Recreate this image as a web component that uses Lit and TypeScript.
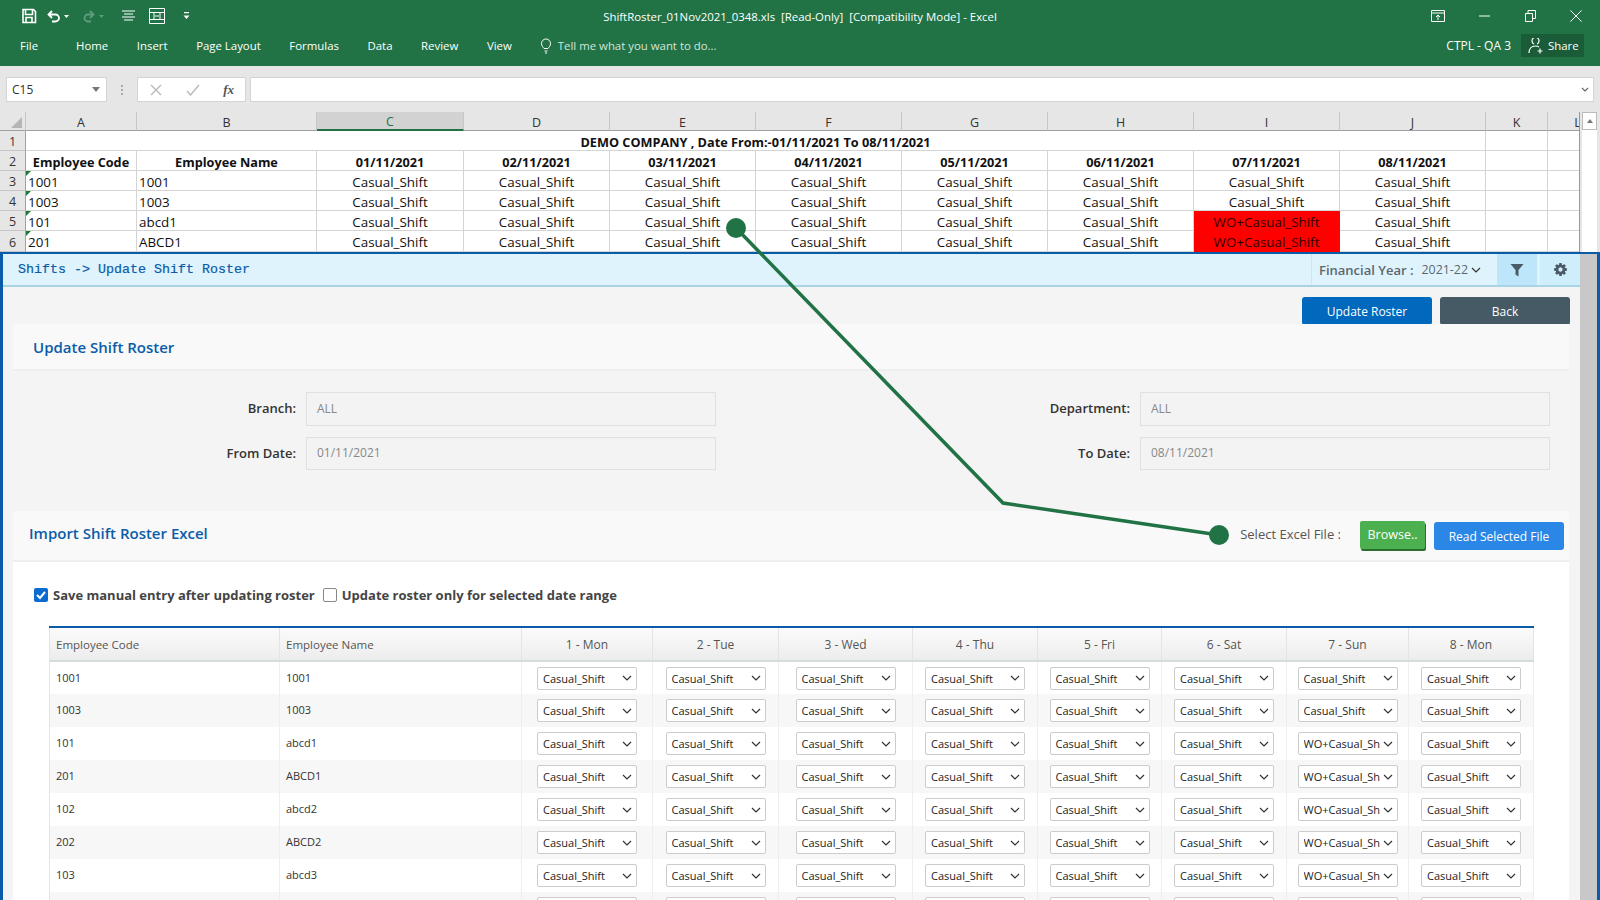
import { LitElement, html, css, svg } from 'lit';
import { customElement } from 'lit/decorators.js';

const sheetCols = ['A', 'B', 'C', 'D', 'E', 'F', 'G', 'H', 'I', 'J', 'K', 'L'];
const sheetDates = ['01/11/2021', '02/11/2021', '03/11/2021', '04/11/2021', '05/11/2021', '06/11/2021', '07/11/2021', '08/11/2021'];
const employees = [
  ['1001', '1001', false],
  ['1003', '1003', false],
  ['101', 'abcd1', true],
  ['201', 'ABCD1', true],
  ['102', 'abcd2', true],
  ['202', 'ABCD2', true],
  ['103', 'abcd3', true],
  ['203', 'ABCD3', true],
] as const;
const days = ['1 - Mon', '2 - Tue', '3 - Wed', '4 - Thu', '5 - Fri', '6 - Sat', '7 - Sun', '8 - Mon'];
const cogPath = 'M1152 896q0-106-75-181t-181-75-181 75-75 181 75 181 181 75 181-75 75-181zm512-109v222q0 12-8 23t-20 13l-185 28q-19 54-39 91 35 50 107 138 10 12 10 25t-9 23q-27 37-99 108t-94 71q-12 0-26-9l-138-108q-44 23-91 38-16 136-29 186-7 28-36 28h-222q-14 0-24.5-8.5t-11.5-21.5l-28-184q-49-16-90-37l-141 107q-10 9-25 9-14 0-25-11-126-114-165-168-7-10-7-23 0-12 8-23 15-21 51-66.5t54-70.5q-27-50-41-99l-183-27q-13-2-21-12.5t-8-23.5v-222q0-12 8-23t19-13l186-28q14-46 39-92-40-57-107-138-10-12-10-24 0-10 9-23 26-36 98.5-107.5t94.5-71.5q13 0 26 10l138 107q44-23 91-38 16-136 29-186 7-28 36-28h222q14 0 24.5 8.5t11.5 21.5l28 184q49 16 90 37l142-107q9-9 24-9 13 0 25 10 129 119 165 170 7 8 7 22 0 12-8 23-15 21-51 66.5t-54 70.5q26 50 41 98l183 28q13 2 21 12.5t8 23.5z';

const chevron = svg`<svg class="chev" width="10" height="6" viewBox="0 0 10 6"><path d="M1 1l4 4 4-4" fill="none" stroke="#333" stroke-width="1.2"/></svg>`;

@customElement('app-root')
export class AppRoot extends LitElement {
  static styles = css`
    :host {
      display: block;
      position: relative;
      width: 1600px;
      height: 900px;
      overflow: hidden;
      background: #e6e6e6;
      font-family: 'Open Sans', 'Noto Sans', sans-serif;
      color: #333;
    }
    svg { display: block; }

    /* excel chrome */
    .ribbon { height: 66px; background: #217346; color: #fff; font-size: 11.4px; display: flex; flex-direction: column; }
    .title-row { height: 32px; display: flex; align-items: center; position: relative; }
    .qat { display: flex; align-items: center; padding-left: 20px; gap: 0; }
    .qat span { display: flex; justify-content: center; }
    .doc-title { position: absolute; left: 0; right: 0; text-align: center; font-size: 11.4px; top: 9px; white-space: pre; }
    .win { margin-left: auto; display: flex; position: relative; padding-right: 1px; }
    .win span { width: 46px; display: flex; justify-content: center; align-items: center; }
    .tab-row { height: 34px; display: flex; align-items: center; padding-left: 20px; padding-bottom: 7px; box-sizing: border-box; position: relative; }
    .tab-row .file { margin-right: 38px; }
    .tabs { display: flex; gap: 28.6px; }
    .tell { display: flex; align-items: center; gap: 6px; margin-left: 28px; color: #d5e4dc; }
    .acct { margin-left: auto; display: flex; align-items: center; gap: 10px; padding-right: 16px; }
    .acct > span { font-size: 12px; }
    .share { display: flex; align-items: center; gap: 4px; width: 63px; height: 23px; padding-left: 7px; box-sizing: border-box; background: #1a5c38; }

    .formula { height: 46px; box-sizing: border-box; padding: 11px 6px 10px; display: flex; align-items: stretch; font-size: 12px; }
    .box { background: #fff; border: 1px solid #d4d4d4; box-sizing: border-box; display: flex; align-items: center; }
    .name-box { width: 101px; padding: 0 6px 0 5px; justify-content: space-between; }
    .caret { width: 0; height: 0; border: 4px solid transparent; border-top: 5px solid #777; border-bottom: 0; }
    .dots { width: 30px; display: flex; flex-direction: column; gap: 2px; align-items: center; justify-content: center; }
    .dots i { width: 2px; height: 2px; background: #aaa; }
    .fx-box { width: 109px; justify-content: space-between; padding: 0 11px 0 12px; color: #777; }
    .fx { font: italic bold 13px 'Liberation Serif', serif; color: #555; }
    .input-box { width: 1344px; margin-left: 4px; justify-content: flex-end; padding-right: 4px; }

    /* sheet */
    .sheet-wrap { height: 140px; display: flex; background: #e6e6e6; }
    .sheet { width: 1579px; flex-shrink: 0; display: grid; grid-template-columns: 26px 111px 180px 147px 146px 146px 146px 146px 146px 146px 146px 62px 60px; grid-template-rows: 19px repeat(5, 20px) 21px; font-size: 13.4px; color: #111; overflow: hidden; border-right: 1px solid #999; box-sizing: content-box; }
    .cell { background: #fff; border-right: 1px solid #d4d4d4; border-bottom: 1px solid #d4d4d4; box-sizing: border-box; display: flex; align-items: center; justify-content: center; white-space: nowrap; position: relative; overflow: hidden; padding-top: 2px; }
    .cell.left { justify-content: flex-start; padding-left: 2px; }
    .cell.b { font-weight: 700; font-size: 12.7px; }
    .cell.red { background: #f00; border-color: #f00; color: #300; }
    .cell.flag::before { content: ''; position: absolute; left: 0; top: 0; border-top: 5px solid #1c7a3c; border-right: 5px solid transparent; }
    .cell.merged { grid-column: 2 / span 10; }
    .hd { background: #e6e6e6; border-right: 1px solid #c6c6c6; border-bottom: 1px solid #a0a0a0; box-sizing: border-box; display: flex; align-items: center; justify-content: center; font-size: 12.5px; color: #333; position: relative; overflow: hidden; padding-top: 2px; }
    .hd.sel { background: #d2d2d2; border-bottom: 2px solid #217346; color: #217346; }
    .hd.row { border-bottom: 1px solid #c6c6c6; border-right: 1px solid #a0a0a0; }
    .corner { align-items: flex-end; justify-content: flex-end; padding: 0 3px 2px 0; }
    .corner i { border-bottom: 11px solid #b5b5b5; border-left: 11px solid transparent; }
    .vscroll { width: 15px; margin-left: 2px; background: #fff; box-sizing: border-box; display: flex; flex-direction: column; align-items: center; }
    .vscroll span { width: 15px; height: 18px; background: #fff; border: 1px solid #bbb; box-sizing: border-box; display: flex; align-items: center; justify-content: center; }
    .vscroll span i { border: 3px solid transparent; border-bottom: 4px solid #777; border-top: 0; }

    /* web app panel */
    .panel { height: 648px; display: flex; border-top: 2px solid #0a5ca8; border-left: 3px solid #0a5ca8; border-right: 3px solid #0a5ca8; box-sizing: border-box; background: #f4f4f4; }
    .main { width: 1577px; display: flex; flex-direction: column; }
    .page-scroll { width: 17px; background: #c8c8c8; }
    .crumb { height: 31px; background: #dff3fd; border-bottom: 2px solid #a8d4e4; display: flex; align-items: center; flex-shrink: 0; box-sizing: content-box; }
    .crumb-text { font: 13.33px 'Liberation Mono', monospace; color: #0a5ca8; padding-left: 15px; -webkit-text-stroke: 0.2px #0a5ca8; }
    .fy { margin-left: auto; height: 100%; display: flex; align-items: center; border-left: 1px solid #cbe7f5; padding-left: 7px; width: 186px; box-sizing: border-box; color: #5b6770; }
    .fy b { font-size: 13px; font-weight: 600; margin-right: 8px; }
    .fy span { font-size: 12.4px; margin-right: 3px; }
    .tool { width: 40px; height: 100%; background: #bde6fb; display: flex; align-items: center; justify-content: center; margin-right: 3px; }
    .tool.plain { background: #cfeefc; margin-right: 0; width: 40px; }
    .actions { height: 37px; flex-shrink: 0; display: flex; justify-content: flex-end; align-items: flex-start; gap: 8px; padding: 10px 10px 0 0; box-sizing: border-box; }
    .btn { height: 28px; border-radius: 3px; color: #fff; font-size: 12px; display: flex; align-items: center; justify-content: center; box-sizing: border-box; }
    .btn.primary { width: 130px; background: #0069bd; }
    .btn.dark { width: 130px; background: #455a64; }
    .head { margin: 0 11px 0 10px; background: #f9f9f9; border-bottom: 2px solid #eeeeee; display: flex; align-items: center; box-sizing: border-box; flex-shrink: 0; }
    .head h2 { margin: 0; font-size: 15px; font-weight: 600; color: #0a5ca8; }
    .head.one { height: 47px; padding-left: 20px; }
    .head.two { height: 51px; padding-left: 16px; margin-top: 41px; }
    .head.two h2 { margin-bottom: 5px; }
    .form { margin: 21px 11px 0 10px; display: grid; grid-template-columns: 283px 410px 404px 410px; grid-template-rows: 34px 33px; column-gap: 10px; row-gap: 11px; align-items: center; }
    .form label { text-align: right; font-size: 13px; font-weight: 600; color: #333; padding-bottom: 2px; }
    .ro { height: 100%; box-sizing: border-box; border: 1px solid #e0e0e0; background: #f3f3f3; color: #888; font-size: 12px; display: flex; align-items: center; padding: 0 0 2px 10px; }
    .import-right { margin-left: auto; display: flex; align-items: center; padding-right: 5px; }
    .import-right .lbl { font-size: 13px; color: #555; margin: 0 19px 4px 0; }
    .browse { width: 65px; height: 28px; background: #4caf50; color: #fff; font-size: 12.5px; border-radius: 2px; box-shadow: 1px 2px 0 #2c6e30; display: flex; align-items: center; justify-content: center; margin-right: 9px; margin-top: -2px; }
    .read { width: 130px; background: #2a87e6; padding-top: 1px; }
    .body { margin: 0 11px 0 10px; background: #fff; flex: 1; padding: 26px 0 0 21px; overflow: hidden; }
    .checks { display: flex; align-items: center; height: 14px; font-size: 13px; font-weight: 700; color: #444; white-space: nowrap; }
    .cb { width: 14px; height: 14px; box-sizing: border-box; border-radius: 2px; margin-right: 5px; flex-shrink: 0; }
    .cb.on { background: #0a6cd0; }
    .cb.off { border: 1.5px solid #888; background: #fff; margin-left: 8px; }
    table { border-collapse: collapse; table-layout: fixed; width: 1484px; margin: 24px 0 0 15px; font-size: 11px; color: #333; border-top: 2px solid #0a5ca8; }
    th { height: 34px; font-weight: 400; font-size: 12px; color: #555; background: linear-gradient(#fbfbfb, #ececec); border-right: 1px solid #e4e4e4; border-bottom: 2px solid #d5dcdc; padding: 1px 6px 0; text-align: center; box-sizing: border-box; }
    th.left { text-align: left; font-size: 11.5px; }
    th:first-child, td:first-child { border-left: 1px solid #e4e4e4; }
    td { height: 33px; border-right: 1px solid #eeeeee; padding: 0 6px; box-sizing: border-box; }
    td.txt { padding-bottom: 2px; }
    tbody tr:nth-child(even) td { background: #f7f7f7; }
    .select { width: 100px; height: 23px; margin: 0 auto; box-sizing: border-box; border: 1px solid #ccc; border-radius: 2px; background: #fff; display: flex; align-items: center; gap: 3px; padding: 0 4px 0 5px; font-size: 11px; color: #222; }
    .select span { flex: 1; overflow: hidden; white-space: nowrap; }
    .overlay { position: absolute; left: 0; top: 0; pointer-events: none; }
  `;

  renderSheet() {
    return html`
      <div class="sheet">
        <div class="hd corner"><i></i></div>
        ${sheetCols.map((c) => html`<div class="hd ${c === 'C' ? 'sel' : ''}">${c}</div>`)}

        <div class="hd row">1</div>
        <div class="cell b merged">DEMO COMPANY , Date From:-01/11/2021 To 08/11/2021</div>
        <div class="cell"></div><div class="cell"></div>

        <div class="hd row">2</div>
        <div class="cell b">Employee Code</div>
        <div class="cell b">Employee Name</div>
        ${sheetDates.map((d) => html`<div class="cell b">${d}</div>`)}
        <div class="cell"></div><div class="cell"></div>

        ${employees.slice(0, 4).map((e, i) => html`
          <div class="hd row">${i + 3}</div>
          <div class="cell left flag">${e[0]}</div>
          <div class="cell left">${e[1]}</div>
          ${sheetDates.map((_, d) => d === 6 && e[2]
            ? html`<div class="cell red">WO+Casual_Shift</div>`
            : html`<div class="cell">Casual_Shift</div>`)}
          <div class="cell"></div><div class="cell"></div>
        `)}
      </div>
      <div class="vscroll"><span><i></i></span></div>
    `;
  }

  renderTable() {
    const widths = [230, 242, 131, 126, 134, 125, 124, 125, 122, 125];
    return html`
      <table>
        <colgroup>${widths.map((w) => html`<col style="width:${w}px" />`)}</colgroup>
        <thead>
          <tr>
            <th class="left">Employee Code</th>
            <th class="left">Employee Name</th>
            ${days.map((d) => html`<th>${d}</th>`)}
          </tr>
        </thead>
        <tbody>
          ${employees.map((e) => html`
            <tr>
              <td class="txt">${e[0]}</td>
              <td class="txt">${e[1]}</td>
              ${days.map((_, d) => html`
                <td><div class="select"><span>${d === 6 && e[2] ? 'WO+Casual_Shift' : 'Casual_Shift'}</span>${chevron}</div></td>
              `)}
            </tr>
          `)}
        </tbody>
      </table>
    `;
  }

  render() {
    return html`
      <div class="ribbon">
        <div class="title-row">
          <div class="doc-title">ShiftRoster_01Nov2021_0348.xls  [Read-Only]  [Compatibility Mode] - Excel</div>
          <div class="qat">
            <span style="width:18px"><svg width="16" height="16" viewBox="0 0 16 16"><path d="M2 1.5h10.5L14.5 3.5V14.5H2z M4.5 1.5v5h7v-5 M5 14.5v-5h6v5" fill="none" stroke="#fff" stroke-width="1.6"/></svg></span>
            <span style="width:40px"><svg width="24" height="14" viewBox="0 0 24 14"><path d="M3 5.5h6.5a3.5 3.5 0 0 1 0 7H6 M6 2L2.5 5.5 6 9" fill="none" stroke="#fff" stroke-width="1.8"/><path d="M18 6h5l-2.5 3z" fill="#fff"/></svg></span>
            <span style="width:32px"><svg width="24" height="14" viewBox="0 0 24 14"><path d="M11 5.5H6a3.5 3.5 0 0 0 0 7h3 M8 2l3.5 3.5L8 9" fill="none" stroke="#5d9c7c" stroke-width="1.8"/><path d="M17 6h5l-2.5 3z" fill="#5d9c7c"/></svg></span>
            <span style="width:36px"><svg width="15" height="14" viewBox="0 0 15 14"><path d="M1 2h13M3 5h9M1 8h13M3 11h9" stroke="#fff" stroke-width="1.2"/></svg></span>
            <span style="width:22px"><svg width="16" height="16" viewBox="0 0 16 16"><path d="M.5.5h15v15H.5z M.5 4.5h15M.5 11.5h15M5 4.5v7M11 4.5v7M6 8h4" fill="none" stroke="#fff"/></svg></span>
            <span style="width:36px"><svg width="7" height="8" viewBox="0 0 7 8"><path d="M1 0h5v1.2H1z M.5 3.5h6L3.500 7z" fill="#fff"/></svg></span>
          </div>
          <div class="win">
            <span><svg width="14" height="12" viewBox="0 0 14 12"><path d="M.5.500h13v11H.5z M.5 3h13 M7 10V5 M5 7l2-2 2 2" fill="none" stroke="#fff"/></svg></span>
            <span><svg width="11" height="2" viewBox="0 0 11 2"><path d="M0 1h11" stroke="#fff"/></svg></span>
            <span><svg width="11" height="12" viewBox="0 0 11 12"><path d="M.5 3.500h7v8h-7z M3 3.500V.500h7.500v8H7.500" fill="none" stroke="#fff"/></svg></span>
            <span><svg width="12" height="12" viewBox="0 0 12 12"><path d="M.5.500l11 11M11.500.500l-11 11" stroke="#fff"/></svg></span>
          </div>
        </div>
        <div class="tab-row">
          <span class="file">File</span>
          <div class="tabs">
            <span>Home</span><span>Insert</span><span>Page Layout</span><span>Formulas</span><span>Data</span><span>Review</span><span>View</span>
          </div>
          <div class="tell">
            <svg width="12" height="16" viewBox="0 0 12 16"><path d="M4 10.500C3 9 1.500 8 1.500 5.500a4.500 4.500 0 0 1 9 0C10.500 8 9 9 8 10.500z M4.500 13h3M5 15h2" fill="none" stroke="#fff"/></svg>
            <span>Tell me what you want to do...</span>
          </div>
          <div class="acct">
            <span>CTPL - QA 3</span>
            <div class="share">
              <svg width="16" height="16" viewBox="0 0 16 16"><path d="M9 6a3.500 3.500 0 1 0-3 0 M1 15c0-4 2.500-7 6.500-7 1.500 0 2.500.4 3.500 1 M12 10.500v5M9.500 13h5" fill="none" stroke="#fff" stroke-width="1.2"/></svg>
              <span>Share</span>
            </div>
          </div>
        </div>
      </div>

      <div class="formula">
        <div class="box name-box"><span>C15</span><i class="caret"></i></div>
        <div class="dots"><i></i><i></i><i></i></div>
        <div class="box fx-box">
          <svg width="12" height="12" viewBox="0 0 12 12"><path d="M1 1l10 10M11 1L1 11" stroke="#b8b8b8" stroke-width="1.4"/></svg>
          <svg width="14" height="12" viewBox="0 0 14 12"><path d="M1 7l3.500 4L13 1" fill="none" stroke="#b8b8b8" stroke-width="1.4"/></svg>
          <span class="fx">fx</span>
        </div>
        <div class="box input-box"><svg width="8" height="5" viewBox="0 0 8 5"><path d="M1 1l3 3 3-3" fill="none" stroke="#666" stroke-width="1.2"/></svg></div>
      </div>

      <div class="sheet-wrap">${this.renderSheet()}</div>

      <div class="panel">
        <div class="main">
          <div class="crumb">
            <span class="crumb-text">Shifts -&gt; Update Shift Roster</span>
            <div class="fy">
              <b>Financial Year :</b><span>2021-22</span>${chevron}
            </div>
            <div class="tool"><svg width="14" height="14" viewBox="0 0 14 14"><path d="M.5 1h13L8.500 7v6.500l-3-2V7z" fill="#4a5a66"/></svg></div>
            <div class="tool plain"><svg width="15" height="15" viewBox="0 0 1792 1792"><path fill="#4a5a66" fill-rule="evenodd" d="${cogPath}"/></svg></div>
          </div>

          <div class="actions">
            <div class="btn primary">Update Roster</div>
            <div class="btn dark">Back</div>
          </div>

          <div class="head one"><h2>Update Shift Roster</h2></div>
          <div class="form">
            <label>Branch:</label><div class="ro">ALL</div>
            <label>Department:</label><div class="ro">ALL</div>
            <label>From Date:</label><div class="ro">01/11/2021</div>
            <label>To Date:</label><div class="ro">08/11/2021</div>
          </div>

          <div class="head two">
            <h2>Import Shift Roster Excel</h2>
            <div class="import-right">
              <span class="lbl">Select Excel File :</span>
              <div class="browse">Browse..</div>
              <div class="btn read">Read Selected File</div>
            </div>
          </div>

          <div class="body">
            <div class="checks">
              <svg class="cb on" viewBox="0 0 14 14"><path d="M3 7l3 3 5-6" fill="none" stroke="#fff" stroke-width="2"/></svg>
              <span>Save manual entry after updating roster</span>
              <div class="cb off"></div>
              <span>Update roster only for selected date range</span>
            </div>
            ${this.renderTable()}
          </div>
        </div>
        <div class="page-scroll"></div>
      </div>

      <svg class="overlay" width="1600" height="900" viewBox="0 0 1600 900">
        <path d="M736 228L1003 503L1219 535" fill="none" stroke="#217346" stroke-width="3.500"/>
        <circle cx="736" cy="228" r="10" fill="#217346"/>
        <circle cx="1219" cy="535" r="10" fill="#217346"/>
      </svg>
    `;
  }
}
